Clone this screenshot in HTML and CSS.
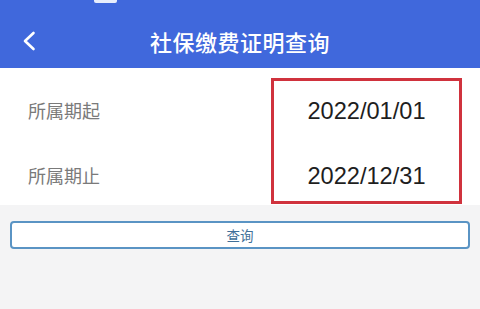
FILE: index.html
```html
<!DOCTYPE html>
<html lang="zh-CN">
<head>
<meta charset="utf-8">
<link rel="stylesheet" href="styles.css">
<title>社保缴费证明查询</title>
</head>
<body>
<header class="header">
  <div class="status"><span class="status-frag"></span></div>
  <div class="nav">
    <svg class="back" width="14" height="20" viewBox="0 0 14 20"><path d="M11.5 2 L3 10 L11.5 18" fill="none" stroke="#fff" stroke-width="2.6" stroke-linecap="round" stroke-linejoin="round"/></svg>
    <h1 class="title">社保缴费证明查询</h1>
  </div>
</header>
<section class="form">
  <div class="labels">
    <div class="row label">所属期起</div>
    <div class="row label">所属期止</div>
  </div>
  <div class="box">
    <div class="row date">2022/01/01</div>
    <div class="row date">2022/12/31</div>
  </div>
</section>
<div class="actions">
  <button class="query">查询</button>
</div>
</body>
</html>
```

FILE: styles.css
```css
html, body {
  margin: 0;
  padding: 0;
}
body {
  width: 480px;
  height: 309px;
  overflow: hidden;
  background: #f4f4f5;
  font-family: "Noto Sans CJK SC", "Liberation Sans", sans-serif;
}
.header {
  height: 68px;
  background: #4068dc;
  display: flex;
  flex-direction: column;
}
.status {
  height: 14px;
  display: flex;
  align-items: flex-start;
  padding-left: 94px;
}
.status-frag {
  display: block;
  width: 23px;
  height: 3px;
  background: #e8eefc;
  border-radius: 0 0 2px 2px;
}
.nav {
  flex: 1;
  display: flex;
  align-items: center;
  justify-content: center;
  position: relative;
  padding-bottom: 1px;
}
.back {
  position: absolute;
  left: 22px;
  top: 17px;
}
.title {
  margin: 0;
  color: #fff;
  font-size: 22px;
  font-weight: 500;
  letter-spacing: 0.5px;
  line-height: 30px;
}
.form {
  background: #fff;
  display: flex;
  justify-content: space-between;
  padding: 10px 18px 1px 28px;
}
.labels {
  display: flex;
  flex-direction: column;
  gap: 35px;
  padding-top: 17px;
}
.row {
  height: 30px;
  line-height: 30px;
}
.label {
  font-size: 18px;
  color: #7a7a7a;
}
.box {
  width: 185px;
  border: 3px solid #d0323d;
  display: flex;
  flex-direction: column;
  align-items: center;
  gap: 35px;
  padding-top: 15px;
  box-sizing: content-box;
  height: 105px;
}
.date {
  font-family: "Liberation Sans", Arial, sans-serif;
  font-size: 23.6px;
  color: #1e1e1e;
}
.actions {
  padding: 16px 10px 0 10px;
}
.query {
  display: block;
  width: 100%;
  height: 28px;
  background: #fff;
  border: 2px solid #5a94c4;
  border-radius: 4px;
  color: #3f6f98;
  font-family: "Noto Sans CJK SC", sans-serif;
  font-size: 13.5px;
  padding: 0;
  line-height: 24px;
}
```
